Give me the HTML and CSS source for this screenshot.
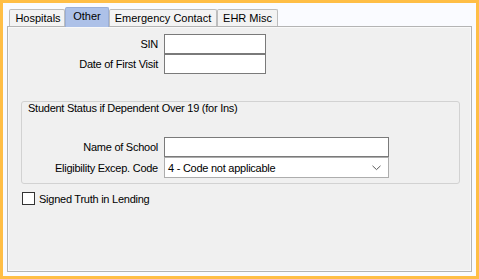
FILE: index.html
```html
<!DOCTYPE html>
<html>
<head>
<meta charset="utf-8">
<link rel="stylesheet" href="styles.css">
</head>
<body>
<div class="frame">
  <div class="tabs">
    <div class="tab tab-hosp">Hospitals</div>
    <div class="tab tab-active tab-other">Other</div>
    <div class="tab tab-emerg">Emergency Contact</div>
    <div class="tab tab-ehr">EHR Misc</div>
  </div>
  <div class="panel">
    <div class="form-top">
      <div class="lbl">SIN</div>
      <div class="textbox"></div>
      <div class="lbl">Date of First Visit</div>
      <div class="textbox"></div>
    </div>
    <div class="group">
      <div class="group-title">Student Status if Dependent Over 19 (for Ins)</div>
      <div class="group-form">
        <div class="lbl">Name of School</div>
        <div class="textbox"></div>
        <div class="lbl">Eligibility Excep. Code</div>
        <div class="combo">
          <span class="combo-text">4 - Code not applicable</span>
          <svg class="chev" width="9" height="6" viewBox="0 0 9 6"><path d="M0.5 0.8 L4.5 4.6 L8.5 0.8" fill="none" stroke="#5a5a5a" stroke-width="1"/></svg>
        </div>
      </div>
    </div>
    <div class="check">
      <span class="box"></span>
      <span class="check-text">Signed Truth in Lending</span>
    </div>
  </div>
</div>
</body>
</html>
```
FILE: styles.css
```css
html, body {
  margin: 0;
  padding: 0;
}
body {
  font-family: "Liberation Sans", Arial, sans-serif;
  font-size: 11px;
  color: #000;
}
.frame {
  width: 479px;
  height: 279px;
  box-sizing: border-box;
  border: 3px solid #ffbe46;
  background: #fafbff;
  padding: 4px;
  display: flex;
  flex-direction: column;
}
.tabs {
  height: 19px;
  display: flex;
  align-items: flex-end;
  padding-left: 2px;
}
.tab {
  box-sizing: border-box;
  height: 17px;
  line-height: 16px;
  border: 1px solid #bdbdbd;
  border-bottom: none;
  border-radius: 2px 2px 0 0;
  background: #f3f3f3;
  text-align: center;
  white-space: nowrap;
}
.tab-hosp { width: 56px; padding-left: 2px; }
.tab-other { width: 44px; }
.tab-emerg { width: 108px; }
.tab-ehr { width: 61px; }
.tab-active {
  height: 20px;
  line-height: 17px;
  margin-bottom: -1px;
  background: #adc1e8;
  border-color: #9aaed6;
  position: relative;
  z-index: 1;
}
.panel {
  flex: 1;
  border: 1px solid #b4b4b4;
  box-shadow: inset 0 0 0 1px #f9f9f9;
  background: #f0f0f0;
  display: flex;
  flex-direction: column;
  align-items: flex-start;
}
.lbl {
  text-align: right;
  letter-spacing: -0.25px;
  padding-right: 1px;
  align-self: center;
  white-space: nowrap;
}
.form-top {
  margin-top: 7px;
  display: grid;
  grid-template-columns: 151px 102px;
  grid-auto-rows: 20px;
  column-gap: 5px;
}
.textbox {
  box-sizing: border-box;
  border: 1px solid #7a7a7a;
  background: #fff;
}
.group {
  margin-top: 27px;
  margin-left: 13px;
  width: 439px;
  box-sizing: border-box;
  border: 1px solid #d2d2d2;
  border-radius: 3px;
  padding-bottom: 5px;
}
.group-title {
  padding-left: 6px;
  line-height: 13px;
  letter-spacing: -0.25px;
  white-space: nowrap;
}
.group-form {
  margin-top: 22px;
  display: grid;
  grid-template-columns: 137px 225px;
  grid-template-rows: 20px 21px;
  column-gap: 5px;
}
.combo {
  box-sizing: border-box;
  border: 1px solid #adadad;
  background: #fff;
  display: flex;
  align-items: center;
  justify-content: space-between;
  padding-left: 3px;
  padding-right: 7px;
  letter-spacing: -0.25px;
  white-space: nowrap;
}
.chev {
  display: block;
}
.check {
  margin-top: 8px;
  margin-left: 14px;
  display: flex;
  align-items: center;
  gap: 4px;
}
.box {
  width: 13px;
  height: 13px;
  box-sizing: border-box;
  border: 1px solid #333;
  background: #fff;
}
.check-text {
  letter-spacing: -0.25px;
  white-space: nowrap;
}
```
